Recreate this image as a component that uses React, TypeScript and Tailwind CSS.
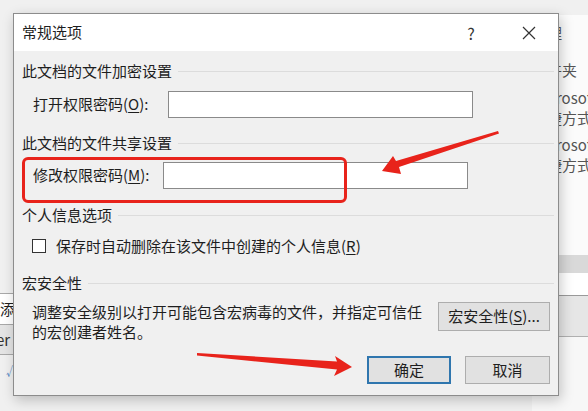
import React from "react";

const font = { fontFamily: '"Noto Sans CJK SC", "Noto Sans", sans-serif' };

function SectionHeader({ title }: { title: string }) {
  return (
    <div className="flex h-[20px] items-center">
      <span className="leading-[20px]">{title}</span>
      <div className="ml-[6px] h-px flex-1 bg-[#dcdcdc]" />
    </div>
  );
}

function Mnemonic({ k }: { k: string }) {
  return (
    <>
      (<span className="underline underline-offset-2">{k}</span>)
    </>
  );
}

function Arrows() {
  return (
    <svg className="pointer-events-none absolute inset-0" width="588" height="411" viewBox="0 0 588 411">
      <polygon
        fill="#e8231b"
        points="498,131 396,161 393,156 382,171 401,174 399,167 499,133.5"
      />
      <polygon
        fill="#e8231b"
        points="197,353 337,361.5 335,356 352,367 334,376 337,369.5 197,355.5"
      />
    </svg>
  );
}

export default function App() {
  return (
    <div
      className="relative flex h-[411px] w-[588px] overflow-hidden bg-[#f0f0f0] text-[15px] text-[#1e1e1e]"
      style={font}
    >
      {/* left background strip */}
      <div className="flex w-[13px] flex-col overflow-hidden whitespace-nowrap">
        <div className="h-[293px]" />
        <div className="h-[32px] border-y border-[#a8a8a8] bg-white leading-[30px]">添加</div>
        <div className="-ml-[4px] h-[30px] border-b border-[#a8a8a8] bg-[#e4e4e4] leading-[30px] text-[#333]">
          er
        </div>
        <div className="ml-[6px] mt-[8px] text-[11px] text-[#4a7fc0]">√</div>
      </div>
      <div className="flex-1" />
      {/* right background panel */}
      <div className="flex w-[56px] flex-col overflow-hidden whitespace-nowrap pt-[15px]">
        <div className="flex flex-1 flex-col bg-[#fbfbfb] leading-[20px] text-[#555]">
          <div className="mt-[8px]">管理</div>
          <div className="mt-[17px]">文件夹</div>
          <div className="mt-[8px]">Microsoft</div>
          <div>快捷方式</div>
          <div className="mt-[7px]">Microsoft</div>
          <div>快捷方式</div>
          <div className="mt-[80px] h-[18px] bg-[#d9d9d9]" />
          <div className="h-[23px] border-b border-[#9a9a9a] bg-white" />
          <div className="h-[41px] border-b border-[#b0b0b0] bg-[#e6e6e6]" />
          <div className="flex-1 bg-[#f7f7f7]" />
        </div>
      </div>

      {/* dialog */}
      <div className="absolute left-[13px] top-[13px] flex w-[546px] flex-col border border-[#8c8c8c] bg-[#f0f0f0] shadow-[2px_4px_12px_rgba(0,0,0,0.22)]">
        <div className="flex h-[37px] items-center bg-white pl-[8px]">
          <span className="flex-1">常规选项</span>
          <span className="w-[20px] text-center text-[16px] text-[#333]">?</span>
          <svg className="ml-[41px] mr-[22px]" width="14" height="14" viewBox="0 0 14 14">
            <path d="M1 1L13 13M13 1L1 13" stroke="#333" strokeWidth="1.2" />
          </svg>
        </div>

        <div className="flex flex-col pb-[11px] pl-[8px] pr-[4px]">
          <div className="mt-[10px]">
            <SectionHeader title="此文档的文件加密设置" />
          </div>
          <div className="mt-[10px] flex h-[27px] items-center">
            <span className="ml-[11px] w-[135px]">
              打开权限密码<Mnemonic k="O" />:
            </span>
            <div className="h-[27px] w-[305px] border border-[#8a8a8a] bg-white" />
          </div>

          <div className="mt-[15px]">
            <SectionHeader title="此文档的文件共享设置" />
          </div>
          <div className="mt-[9px] flex h-[27px] items-center">
            <span className="ml-[11px] w-[130px]">
              修改权限密码<Mnemonic k="M" />:
            </span>
            <div className="h-[27px] w-[305px] border border-[#8a8a8a] bg-white" />
          </div>

          <div className="mt-[16px]">
            <SectionHeader title="个人信息选项" />
          </div>
          <div className="mt-[11px] flex h-[20px] items-center">
            <div className="ml-[10px] h-[14px] w-[14px] border border-[#333] bg-white" />
            <span className="ml-[10px]">
              保存时自动删除在该文件中创建的个人信息<Mnemonic k="R" />
            </span>
          </div>

          <div className="mt-[17px]">
            <SectionHeader title="宏安全性" />
          </div>
          <div className="mt-[9px] flex items-start justify-between pr-[4px]">
            <p className="ml-[10px] w-[395px] leading-[20px]">
              调整安全级别以打开可能包含宏病毒的文件，并指定可信任的宏创建者姓名。
            </p>
            <button className="flex h-[29px] w-[112px] items-center justify-center border border-[#adadad] bg-[#e1e1e1]">
              宏安全性<Mnemonic k="S" />...
            </button>
          </div>

          <div className="mt-[14px] flex justify-end gap-[14px] pr-[4px]">
            <button className="flex h-[28px] w-[84px] items-center justify-center border-2 border-[#2f76ae] bg-[#e1e1e1]">
              确定
            </button>
            <button className="flex h-[28px] w-[85px] items-center justify-center border border-[#adadad] bg-[#e1e1e1]">
              取消
            </button>
          </div>
        </div>
      </div>

      {/* annotations */}
      <div className="pointer-events-none absolute left-[22px] top-[157px] h-[46px] w-[325px] rounded-[6px] border-[3px] border-[#e8231b]" />
      <Arrows />
    </div>
  );
}
